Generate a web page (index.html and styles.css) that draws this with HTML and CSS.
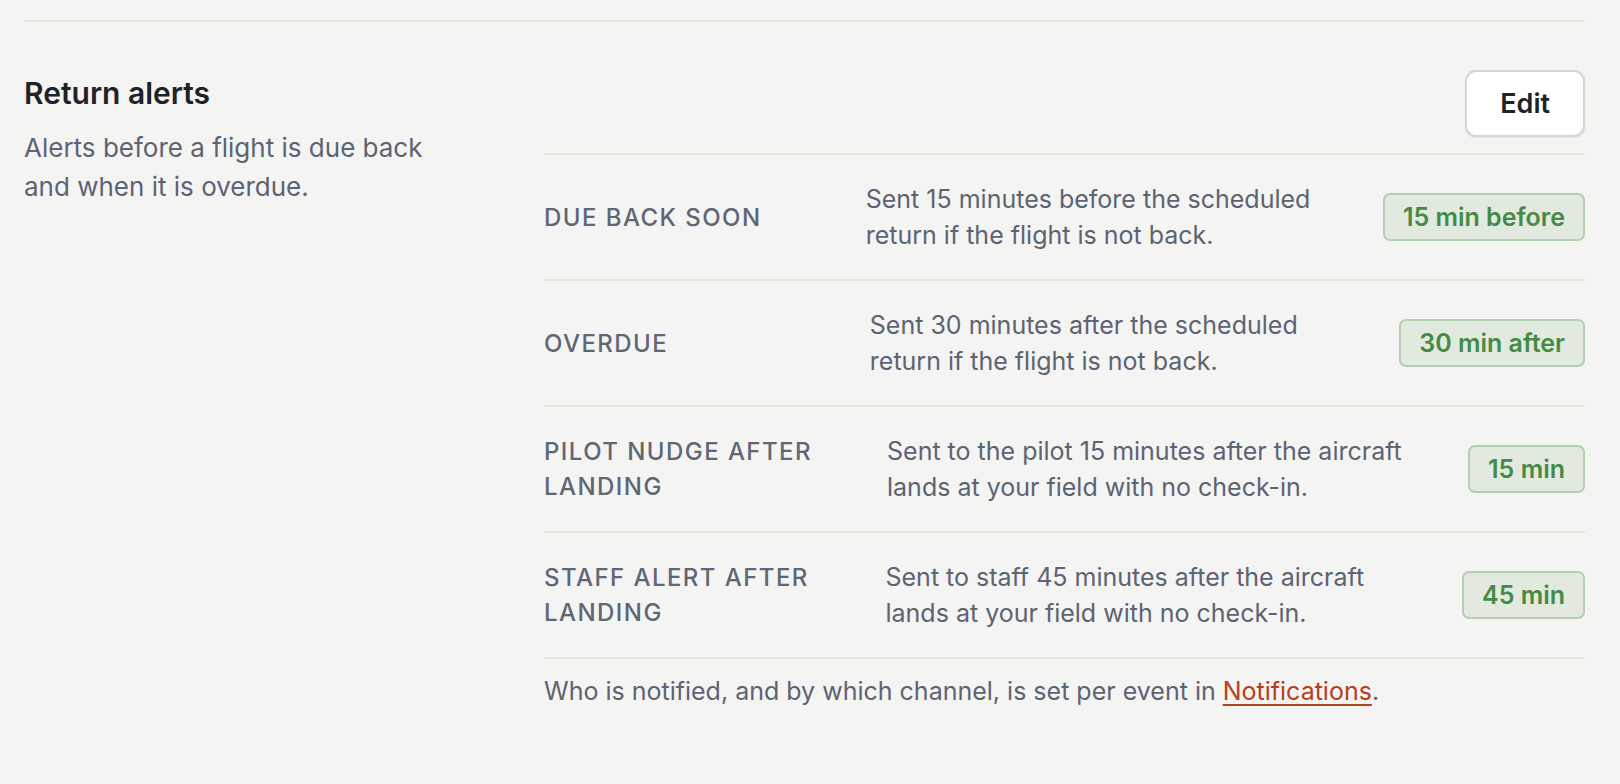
FILE: index.html
```
<!DOCTYPE html>
<html lang="en">
<head>
<meta charset="utf-8">
<title>Return alerts</title>
<link rel="stylesheet" href="styles.css">
</head>
<body>
<main class="page">
  <section class="section">
    <div class="intro">
      <h2 class="title">Return alerts</h2>
      <p class="subtitle">Alerts before a flight is due back and when it is overdue.</p>
    </div>
    <div class="panel">
      <div class="panel-head">
        <button class="btn" type="button">Edit</button>
      </div>
      <ul class="rows">
        <li class="row">
          <span class="label">Due back soon</span>
          <span class="desc">Sent 15 minutes before the scheduled return if the flight is not back.</span>
          <span class="badge">15 min before</span>
        </li>
        <li class="row">
          <span class="label">Overdue</span>
          <span class="desc">Sent 30 minutes after the scheduled return if the flight is not back.</span>
          <span class="badge">30 min after</span>
        </li>
        <li class="row">
          <span class="label">Pilot nudge after landing</span>
          <span class="desc">Sent to the pilot 15 minutes after the aircraft lands at your field with no check-in.</span>
          <span class="badge">15 min</span>
        </li>
        <li class="row">
          <span class="label">Staff alert after landing</span>
          <span class="desc">Sent to staff 45 minutes after the aircraft lands at your field with no check-in.</span>
          <span class="badge">45 min</span>
        </li>
      </ul>
      <p class="note">Who is notified, and by which channel, is set per event in <a class="link" href="#">Notifications</a>.</p>
    </div>
  </section>
</main>
</body>
</html>
```
FILE: styles.css
```
* { box-sizing: border-box; }
html, body { margin: 0; padding: 0; }
body {
  background: #f4f4f2;
  font-family: Inter, "Noto Sans", sans-serif;
  color: #5c6372;
  -webkit-font-smoothing: antialiased;
}
.page {
  padding: 20px 35px 0 24px;
}
.section {
  border-top: 2px solid #e4e4e1;
  display: grid;
  grid-template-columns: 440px 1fr;
  column-gap: 80px;
  padding-top: 49px;
}
.intro {
  padding-top: 0;
}
.title {
  margin: 0;
  font-size: 30px;
  line-height: 45px;
  font-weight: 600;
  color: #1f2328;
}
.subtitle {
  margin: 12px 0 0;
  font-size: 26px;
  line-height: 39px;
  color: #5c6372;
}
.panel-head {
  display: flex;
  justify-content: flex-end;
  margin-top: -1px;
  padding-bottom: 16px;
  border-bottom: 2px solid #e4e4e1;
}
.btn {
  font-family: inherit;
  font-size: 27px;
  line-height: 39px;
  font-weight: 600;
  color: #1f2328;
  background: #ffffff;
  border: 2px solid #d6d6d1;
  border-radius: 11px;
  padding: 12px 33px;
  box-shadow: 0 1px 2px rgba(0,0,0,0.06);
}
.rows {
  list-style: none;
  margin: 0;
  padding: 0;
}
.row {
  display: flex;
  align-items: center;
  gap: 32px;
  padding: 26px 0;
  border-bottom: 2px solid #e4e4e1;
}
.label {
  flex: 1 1 128px;
  font-size: 24px;
  line-height: 35px;
  font-weight: 500;
  letter-spacing: 0.06em;
  text-transform: uppercase;
  color: #5f6675;
}
.desc {
  flex: 3 1 0;
  font-size: 25px;
  line-height: 36px;
  color: #5c6372;
}
.badge {
  flex: none;
  font-size: 25px;
  line-height: 36px;
  font-weight: 600;
  color: #468a46;
  background: #e2eae0;
  border: 2px solid #b4cfb2;
  border-radius: 7px;
  padding: 4px 18px;
}
.note {
  margin: 0;
  padding-top: 14px;
  font-size: 25px;
  line-height: 36px;
  color: #5c6372;
}
.link {
  color: #b5401e;
  text-decoration: underline;
  text-underline-offset: 4px;
  text-decoration-thickness: 2px;
}
```
